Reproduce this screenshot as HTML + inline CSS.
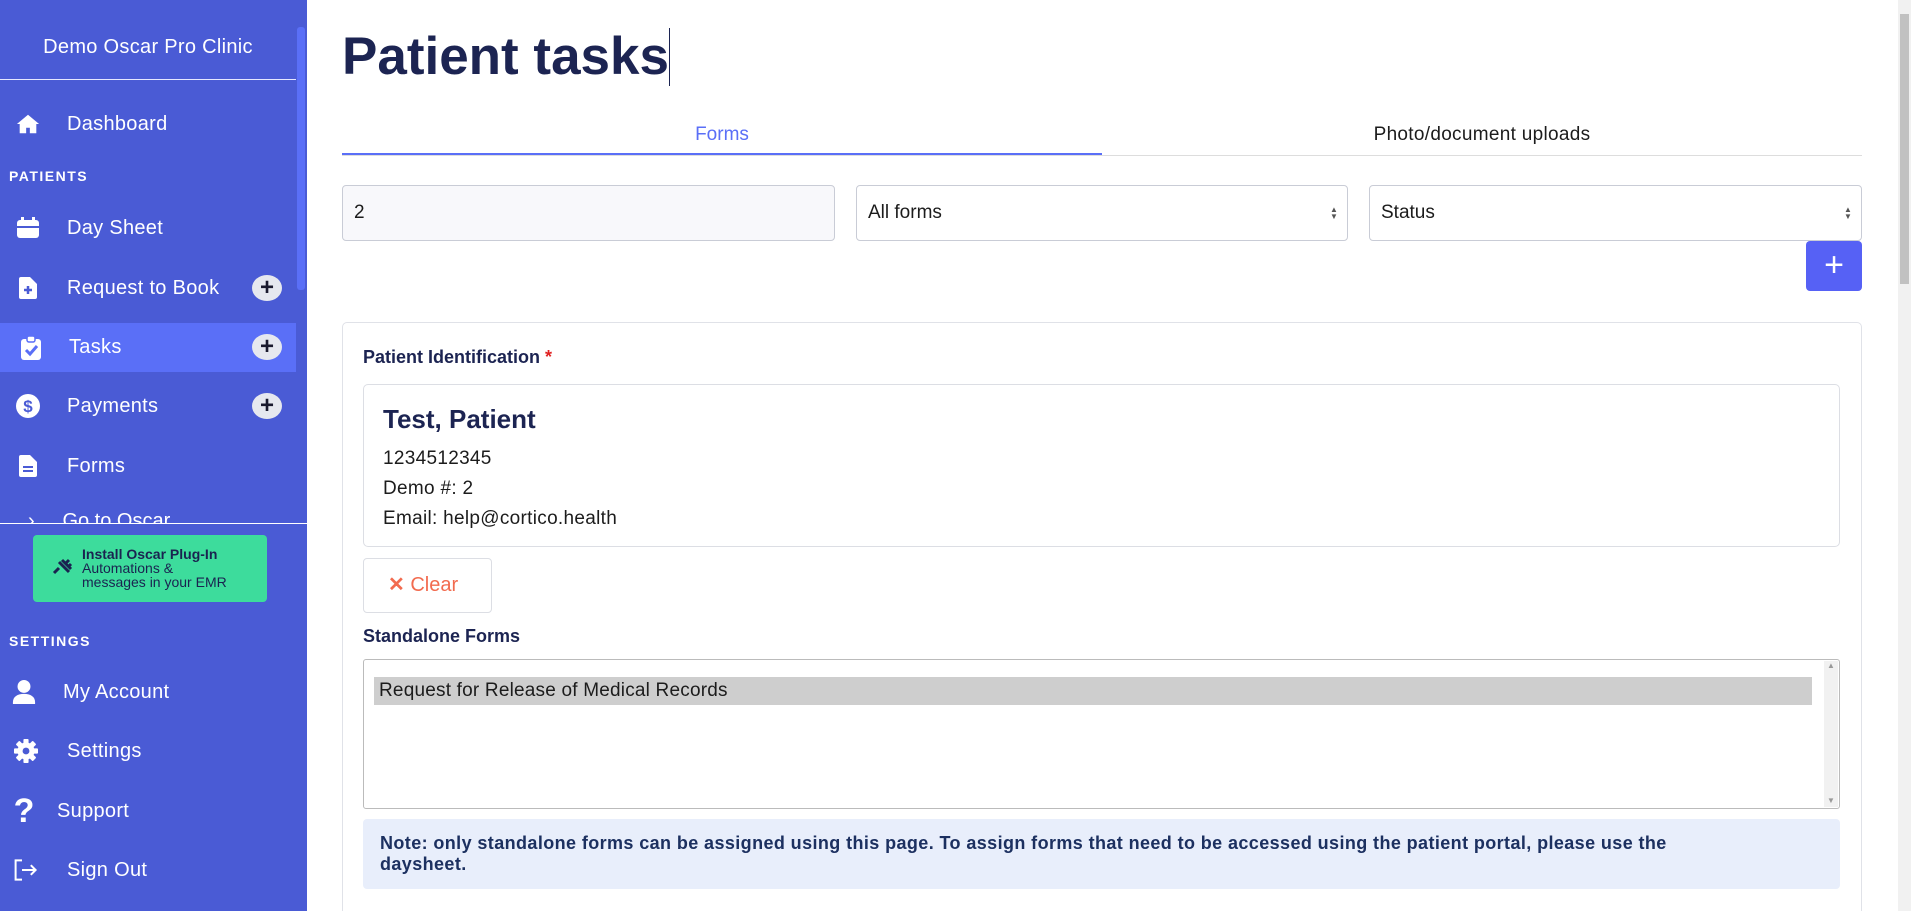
<!DOCTYPE html>
<html style="width:1911px;height:911px;overflow:hidden"><head><meta charset="utf-8"><style>
*{box-sizing:border-box;margin:0;padding:0}
body{width:1911px;height:911px;overflow:hidden;font-family:"Liberation Sans",sans-serif;background:#fff;position:relative;color:#1c2452}
.sb{position:absolute;left:0;top:0;width:307px;height:911px;background:#4a5bd5;color:#fff}
.a{position:absolute}
.it{position:absolute;left:0;width:296px;height:48px;font-size:20px;display:flex;align-items:center}
.it .ic{position:absolute;left:16px;width:24px;height:24px;display:flex;align-items:center;justify-content:center}
.it .tx{position:absolute;left:67px;letter-spacing:.3px}
.plus{position:absolute;left:252px;width:30px;height:26px;border-radius:50%;background:#e6e8ef;color:#1a1a2e;font-size:24px;line-height:26px;text-align:center;font-weight:bold}
.hd{position:absolute;left:9px;font-size:14px;font-weight:bold;letter-spacing:1.5px}
.inp{position:absolute;top:185px;height:56px;border:1px solid #c9ccd6;border-radius:4px;font-size:19px;padding-left:11px;line-height:54px}
.arr{position:absolute;right:9px;top:20px;width:8px;font-size:8px;line-height:7px;color:#555}
</style></head><body>
<div class="sb">
<div class="a" style="left:0;width:296px;top:36px;text-align:center;font-size:20px;letter-spacing:.3px">Demo Oscar Pro Clinic</div>
<div class="a" style="left:0;top:79px;width:296px;height:1px;background:#e6e8ff"></div>
<div class="a" style="left:297px;top:27px;width:8px;height:263px;background:#5a6ff7;border-radius:3px"></div>
<div class="it" style="top:100px"><div class="ic"><svg width="26" height="22" viewBox="0 0 26 22"><path d="M13 1L1 11h3v10h7v-6h4v6h7V11h3z" fill="#fff"/></svg></div><span class="tx">Dashboard</span></div>
<div class="hd" style="top:168px">PATIENTS</div>
<div class="it" style="top:204px"><div class="ic"><svg width="24" height="22" viewBox="0 0 24 22"><rect x="1" y="3" width="22" height="18" rx="3" fill="#fff"/><rect x="5" y="0" width="3" height="5" fill="#fff"/><rect x="16" y="0" width="3" height="5" fill="#fff"/><rect x="1" y="9" width="22" height="2" fill="#4a5bd5"/></svg></div><span class="tx">Day Sheet</span></div>
<div class="it" style="top:264px"><div class="ic"><svg width="18" height="22" viewBox="0 0 18 22"><path d="M2 0h9l7 7v13a2 2 0 0 1-2 2H2a2 2 0 0 1-2-2V2a2 2 0 0 1 2-2z" fill="#fff"/><path d="M9 9v8M5 13h8" stroke="#4a5bd5" stroke-width="2.5"/></svg></div><span class="tx">Request to Book</span><div class="plus" style="top:11px">+</div></div>
<div class="it" style="top:323px;background:#5a6ff7;height:49px"><div class="ic" style="left:19px"><svg width="20" height="24" viewBox="0 0 20 24"><rect x="0" y="3" width="20" height="21" rx="3" fill="#fff"/><rect x="6" y="0" width="8" height="6" rx="2" fill="#fff" stroke="#5a6ff7" stroke-width="1.5"/><path d="M5 14l4 4 7-8" stroke="#5a6ff7" stroke-width="3" fill="none"/></svg></div><span class="tx" style="left:69px">Tasks</span><div class="plus" style="top:11px">+</div></div>
<div class="it" style="top:382px"><div class="ic"><svg width="24" height="24" viewBox="0 0 24 24"><circle cx="12" cy="12" r="12" fill="#fff"/><text x="12" y="18" text-anchor="middle" font-size="17" font-weight="bold" fill="#4a5bd5" font-family="Liberation Sans">$</text></svg></div><span class="tx">Payments</span><div class="plus" style="top:11px">+</div></div>
<div class="it" style="top:442px"><div class="ic"><svg width="18" height="22" viewBox="0 0 18 22"><path d="M2 0h9l7 7v13a2 2 0 0 1-2 2H2a2 2 0 0 1-2-2V2a2 2 0 0 1 2-2z" fill="#fff"/><path d="M4 12h10M4 16h10" stroke="#4a5bd5" stroke-width="2"/></svg></div><span class="tx">Forms</span></div>
<div class="a" style="left:28px;top:510px;font-size:20px;height:13px;overflow:hidden;width:200px">›&nbsp;&nbsp;&nbsp;&nbsp;&nbsp;Go to Oscar</div>
<div class="a" style="left:0;top:523px;width:307px;height:1px;background:#fff"></div>
<div class="a" style="left:33px;top:535px;width:234px;height:67px;background:#3ddc9c;border-radius:4px;color:#1a2350;font-size:14px;line-height:14px">
<svg class="a" style="left:18px;top:23px" width="22" height="18" viewBox="0 0 22 18"><path d="M3 15l5-5M8 4l10 10M11 2l9 9M14 6l4-4M17 9l3-3" stroke="#1a2350" stroke-width="3"/></svg>
<div class="a" style="left:49px;top:12px"><b>Install Oscar Plug-In</b><br>Automations &amp;<br>messages in your EMR</div></div>
<div class="hd" style="top:633px">SETTINGS</div>
<div class="it" style="top:668px"><div class="ic" style="left:12px"><svg width="26" height="26" viewBox="0 0 26 26"><circle cx="13" cy="7" r="7" fill="#fff"/><path d="M1 24c0-6 5-9 12-9s12 3 12 9v2H1z" fill="#fff"/></svg></div><span class="tx" style="left:63px">My Account</span></div>
<div class="it" style="top:727px"><div class="ic" style="left:14px"><svg width="28" height="28" viewBox="0 0 28 28"><g fill="#fff"><circle cx="14" cy="14" r="10"/><rect x="11" y="0" width="6" height="28" rx="1"/><rect x="0" y="11" width="28" height="6" rx="1"/><rect x="11" y="0" width="6" height="28" rx="1" transform="rotate(45 14 14)"/><rect x="11" y="0" width="6" height="28" rx="1" transform="rotate(-45 14 14)"/></g><circle cx="14" cy="14" r="4" fill="#4a5bd5"/></svg></div><span class="tx">Settings</span></div>
<div class="it" style="top:787px"><div class="ic" style="left:12px"><span style="font-size:34px;font-weight:bold">?</span></div><span class="tx" style="left:57px">Support</span></div>
<div class="it" style="top:846px"><div class="ic" style="left:14px"><svg width="30" height="26" viewBox="0 0 30 26"><path d="M10 1H2v24h8M10 13h17M21 7l6 6-6 6" stroke="#fff" stroke-width="2.5" fill="none"/></svg></div><span class="tx">Sign Out</span></div>
</div>

<div class="a" style="left:342px;top:26px;font-size:53px;font-weight:bold;color:#1c2452">Patient tasks<span style="display:inline-block;width:1px;height:58px;background:#1c2452;vertical-align:-12px"></span></div>
<div class="a" style="left:342px;top:124px;width:760px;text-align:center;color:#5a6ff7;font-size:19px">Forms</div>
<div class="a" style="left:1102px;top:124px;width:760px;text-align:center;color:#1c1c1c;font-size:19px;letter-spacing:.3px">Photo/document uploads</div>
<div class="a" style="left:342px;top:155px;width:1520px;height:1px;background:#ddd"></div>
<div class="a" style="left:342px;top:153px;width:760px;height:2px;background:#5a6ff7"></div>
<div class="inp" style="left:342px;width:493px;background:#f8f8fb;color:#1c1c1c">2</div>
<div class="inp" style="left:856px;width:492px;color:#1c1c1c">All forms<div class="arr">▲<br>▼</div></div>
<div class="inp" style="left:1369px;width:493px;color:#1c1c1c">Status<div class="arr">▲<br>▼</div></div>
<div class="a" style="left:1806px;top:241px;width:56px;height:50px;background:#5661f5;border-radius:4px;color:#fff;font-size:34px;text-align:center;line-height:48px;font-weight:300">+</div>
<div class="a" style="left:342px;top:322px;width:1520px;height:600px;border:1px solid #e0e2e8;border-radius:5px"></div>
<div class="a" style="left:363px;top:347px;font-size:18px;font-weight:bold;color:#1c2452">Patient Identification <span style="color:#e02020">*</span></div>
<div class="a" style="left:363px;top:384px;width:1477px;height:163px;border:1px solid #dcdee4;border-radius:5px"></div>
<div class="a" style="left:383px;top:404px;font-size:26px;font-weight:bold;color:#1c2452">Test, Patient</div>
<div class="a" style="left:383px;top:444px;font-size:19px;line-height:30px;color:#1c1c1c;letter-spacing:.3px">1234512345<br>Demo #: 2<br>Email: help@cortico.health</div>
<div class="a" style="left:363px;top:558px;width:129px;height:55px;border:1px solid #dcdee4;border-radius:4px;color:#f26b4f;font-size:20px;line-height:53px;padding-left:24px"><b>✕</b>&nbsp;Clear</div>
<div class="a" style="left:363px;top:626px;font-size:18px;font-weight:bold;color:#1c2452">Standalone Forms</div>
<div class="a" style="left:363px;top:659px;width:1477px;height:150px;border:1px solid #bbb;border-radius:3px"></div>
<div class="a" style="left:374px;top:677px;width:1438px;height:28px;background:#cecece;font-size:19px;line-height:28px;padding-left:5px;color:#1c1c1c;letter-spacing:.2px">Request for Release of Medical Records</div>
<div class="a" style="left:1824px;top:661px;width:14px;height:146px;background:#f1f1f1;font-size:8px;color:#999;text-align:center">▲<div style="position:absolute;bottom:2px;width:14px">▼</div></div>
<div class="a" style="left:363px;top:819px;width:1477px;height:70px;background:#e8eefb;border-radius:4px;padding:14px 17px;font-size:18px;font-weight:bold;line-height:21px;color:#1c3060;letter-spacing:.4px">Note: only standalone forms can be assigned using this page. To assign forms that need to be accessed using the patient portal, please use the<br>daysheet.</div>
<div class="a" style="left:1898px;top:0;width:13px;height:911px;background:#f1f1f1"></div>
<div class="a" style="left:1900px;top:14px;width:9px;height:270px;background:#c1c1c1"></div>
</body></html>
